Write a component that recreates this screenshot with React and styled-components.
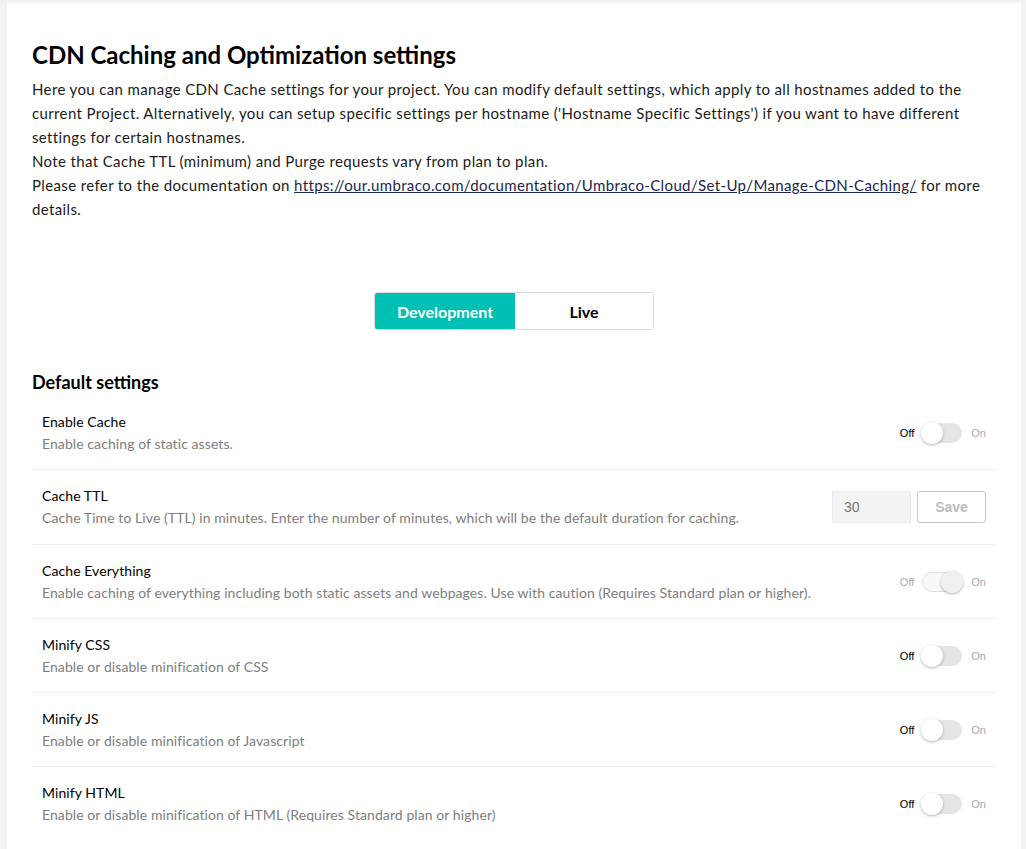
import * as React from "react";

import styled, { createGlobalStyle } from "styled-components";

const GlobalStyle = createGlobalStyle`
  body {
    margin: 0;
    background: #f3f3f5;
    font-family: Lato, "Open Sans", sans-serif;
    color: #1b1b1b;
  }
`;

const Page = styled.div`
  padding: 3px 5px 0 7px;
`;

const Card = styled.div`
  background: #fff;
  padding: 37px 25px 40px 25px;
  min-height: 860px;
  box-sizing: border-box;
`;

const Title = styled.h1`
  margin: 0 0 8px;
  font-size: 24px;
  line-height: 29px;
  font-weight: 700;
  color: #000;
`;

const Intro = styled.p`
  margin: 0;
  font-size: 15px;
  line-height: 24px;
  letter-spacing: 0.37px;
  color: #1b1b1b;

  a {
    color: #1b264f;
    text-decoration: underline;
  }
`;

const TabBar = styled.div`
  display: flex;
  justify-content: center;
  margin: 71px 0 40px;
`;

const TabGroup = styled.div`
  display: flex;
  border: 1px solid #dcdcdc;
  border-radius: 3px;
  overflow: hidden;
`;

const Tab = styled.button`
  width: ${p => p.$width}px;
  height: 36px;
  border: 0;
  margin: 0;
  padding: 0;
  font-family: Lato, sans-serif;
  font-size: 16px;
  font-weight: 700;
  background: ${p => (p.$active ? "#00bfb3" : "#fff")};
  color: ${p => (p.$active ? "#fff" : "#000")};
  cursor: pointer;
`;

const SectionTitle = styled.h2`
  margin: 0 0 2px;
  font-size: 18px;
  line-height: 24px;
  font-weight: 700;
  color: #000;
`;

const Row = styled.div`
  display: flex;
  align-items: center;
  justify-content: space-between;
  padding: 15px 10px ${p => (p.$tall ? "15px" : "14px")};
  border-bottom: ${p => (p.$last ? "0" : "1px solid #f0f0f0")};
`;

const RowText = styled.div`
  display: flex;
  flex-direction: column;
  letter-spacing: 0.08px;
`;

const RowTitle = styled.div`
  font-size: 14px;
  line-height: 22px;
  color: #000;
`;

const RowDesc = styled.div`
  font-size: 14px;
  line-height: 22px;
  color: #7e7e7e;
`;

const SwitchWrap = styled.div`
  display: flex;
  align-items: center;
  gap: 8px;
  font-family: "Liberation Sans", Arial, sans-serif;
  font-size: 11px;
`;

const SwitchLabel = styled.span`
  color: ${p => (p.$active ? "#000" : "#a8a8b0")};
`;

const Track = styled.span`
  position: relative;
  display: block;
  width: 40px;
  height: 20px;
  box-sizing: border-box;
  border-radius: 10px;
  background: ${p => (p.$disabled ? "#f7f8f7" : "#e5e5e7")};
  border: 1px solid ${p => (p.$disabled ? "#e0e0e0" : "#e5e5e7")};
  margin-right: 1px;
`;

const Knob = styled.span`
  position: absolute;
  top: -2px;
  left: ${p => (p.$on ? "18px" : "-2px")};
  width: 22px;
  height: 22px;
  border-radius: 50%;
  background: ${p => (p.$disabled ? "#f0f0f2" : "#fff")};
  box-shadow: 0 1px 3px rgba(0, 0, 0, 0.3);
`;

const TtlControls = styled.div`
  display: flex;
  gap: 6px;
`;

const TtlInput = styled.input`
  width: 79px;
  height: 32px;
  box-sizing: border-box;
  border: 1px solid #ebebed;
  background: #f3f3f5;
  padding: 0 11px;
  font-family: "Liberation Sans", Arial, sans-serif;
  font-size: 14px;
  color: #777;
`;

const SaveButton = styled.button`
  width: 69px;
  height: 32px;
  box-sizing: border-box;
  border: 1px solid #c8c8c8;
  border-radius: 3px;
  background: #fff;
  font-family: "Liberation Sans", Arial, sans-serif;
  font-size: 14px;
  font-weight: 700;
  color: #bdbdbd;
`;

function Switch({ on, disabled }) {
  return (
    <SwitchWrap>
      <SwitchLabel $active={!on && !disabled}>Off</SwitchLabel>
      <Track $disabled={disabled}>
        <Knob $on={on} $disabled={disabled} />
      </Track>
      <SwitchLabel $active={on && !disabled}>On</SwitchLabel>
    </SwitchWrap>
  );
}

const settings = [
  { title: "Enable Cache", desc: "Enable caching of static assets." },
  {
    title: "Cache TTL",
    desc: "Cache Time to Live (TTL) in minutes. Enter the number of minutes, which will be the default duration for caching.",
    ttl: true
  },
  {
    title: "Cache Everything",
    desc: "Enable caching of everything including both static assets and webpages. Use with caution (Requires Standard plan or higher).",
    on: true,
    disabled: true
  },
  { title: "Minify CSS", desc: "Enable or disable minification of CSS" },
  { title: "Minify JS", desc: "Enable or disable minification of Javascript" },
  {
    title: "Minify HTML",
    desc: "Enable or disable minification of HTML (Requires Standard plan or higher)"
  }
];

export default function App() {
  return (
    <Page>
      <GlobalStyle />
      <Card>
        <Title>CDN Caching and Optimization settings</Title>
        <Intro>
          Here you can manage CDN Cache settings for your project. You can modify default settings, which apply to all hostnames added to the current Project. Alternatively, you can setup specific settings per hostname ('Hostname Specific Settings') if you want to have different settings for certain hostnames.
          <br />
          Note that Cache TTL (minimum) and Purge requests vary from plan to plan.
          <br />
          Please refer to the documentation on{" "}
          <a href="#">https://our.umbraco.com/documentation/Umbraco-Cloud/Set-Up/Manage-CDN-Caching/</a>{" "}
          for more details.
        </Intro>
        <TabBar>
          <TabGroup>
            <Tab $active $width={140}>Development</Tab>
            <Tab $width={138}>Live</Tab>
          </TabGroup>
        </TabBar>
        <SectionTitle>Default settings</SectionTitle>
        {settings.map((s, i) => (
          <Row key={s.title} $tall={s.ttl} $last={i === settings.length - 1}>
            <RowText>
              <RowTitle>{s.title}</RowTitle>
              <RowDesc>{s.desc}</RowDesc>
            </RowText>
            {s.ttl ? (
              <TtlControls>
                <TtlInput defaultValue="30" />
                <SaveButton>Save</SaveButton>
              </TtlControls>
            ) : (
              <Switch on={s.on} disabled={s.disabled} />
            )}
          </Row>
        ))}
      </Card>
    </Page>
  );
}
